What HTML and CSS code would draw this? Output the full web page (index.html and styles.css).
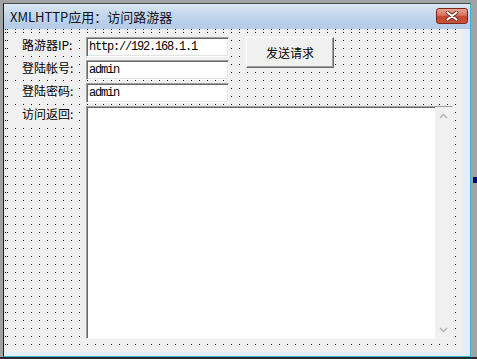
FILE: index.html
```html
<!DOCTYPE html>
<html lang="zh-CN">
<head>
<meta charset="utf-8">
<title>XMLHTTP应用：访问路游器</title>
<link rel="stylesheet" href="styles.css">
</head>
<body>
<div class="desk">
  <div class="window">
    <div class="titlebar">
      <span class="title">XMLHTTP应用：访问路游器</span>
      <span class="close">
        <svg width="14" height="10" viewBox="0 0 14 10">
          <path d="M2.5 1.5 L11.5 8.5 M11.5 1.5 L2.5 8.5" stroke="#5a1d12" stroke-width="3.6" stroke-linecap="round"/>
          <path d="M2.5 1.5 L11.5 8.5 M11.5 1.5 L2.5 8.5" stroke="#ffffff" stroke-width="2.2" stroke-linecap="round"/>
        </svg>
      </span>
    </div>
    <div class="client">
      <div class="form">
        <div class="label">路游器IP:</div>
        <div class="textbox">http://192.168.1.1</div>
        <div class="button">发送请求</div>
        <div class="label">登陆帐号:</div>
        <div class="textbox">admin</div>
        <div class="label">登陆密码:</div>
        <div class="textbox">admin</div>
        <div class="label">访问返回:</div>
        <div class="memo">
          <div class="scroll">
            <svg width="9" height="6" viewBox="0 0 9 6"><path d="M1 5 L4.5 1.5 L8 5" fill="none" stroke="#b4b4b4" stroke-width="1.5"/></svg>
            <svg width="9" height="6" viewBox="0 0 9 6"><path d="M1 1 L4.5 4.5 L8 1" fill="none" stroke="#b4b4b4" stroke-width="1.5"/></svg>
          </div>
        </div>
      </div>
    </div>
  </div>
  <span class="handle"></span>
</div>
</body>
</html>
```
FILE: styles.css
```css
html, body {
  margin: 0;
  padding: 0;
}
body {
  width: 477px;
  height: 359px;
  overflow: hidden;
  background: #a0a0a0;
}
.desk {
  position: relative;
  width: 477px;
  height: 359px;
  box-sizing: border-box;
  padding: 3px 0 0 3px;
  background: #a2a2a2;
  border-bottom: 2px solid #2a2a2a;
}
.window {
  width: 468px;
  height: 354px;
  box-sizing: border-box;
  border-left: 1px solid #1c1c1c;
  border-top: 1px solid #4a4a4a;
  border-right: 1px solid #3cb4d6;
  border-bottom: 1px solid #3cb4d6;
  background: #e4eef8;
  display: flex;
  flex-direction: column;
}
.titlebar {
  height: 25px;
  flex: none;
  display: flex;
  justify-content: space-between;
  align-items: flex-start;
  background: linear-gradient(#dbe7f4, #c3d6ec 45%, #b3cae6);
}
.title {
  margin: 4px 0 0 6px;
  font-family: "Noto Sans CJK SC", "Noto Sans", sans-serif;
  font-size: 13px;
  line-height: 17px;
  color: #10131c;
}
.close {
  margin: 4px 2px 0 0;
  width: 32px;
  height: 16px;
  box-sizing: border-box;
  border: 1px solid #7e2618;
  border-radius: 3px;
  background: linear-gradient(#e6a394, #d8715d 45%, #c64430 55%, #c9523a);
  display: flex;
  align-items: center;
  justify-content: center;
}
.client {
  flex: 1;
  margin: 0 7px 4px 1px;
  background-color: #f0f0f0;
  background-image:
    repeating-linear-gradient(to bottom, transparent 0 1px, #f0f0f0 1px 8px),
    repeating-linear-gradient(to right, #000 0 1px, #f0f0f0 1px 8px);
  background-position: 2px 3px, 2px 3px;
}
.form {
  padding: 8px 0 0 5px;
  display: grid;
  grid-template-columns: 66px 143px auto;
  grid-template-rows: 20px 20px 20px 233px;
  column-gap: 10px;
  row-gap: 3px;
  align-items: start;
}
.label {
  grid-column: 1;
  height: 18px;
  box-sizing: border-box;
  padding: 1px 0 0 12px;
  background: #f0f0f0;
  font-family: "Noto Sans CJK SC", sans-serif;
  font-size: 12px;
  line-height: 14px;
  color: #000;
  white-space: nowrap;
}
.textbox {
  grid-column: 2;
  height: 20px;
  box-sizing: border-box;
  border-top: 1px solid #a0a0a0;
  border-left: 1px solid #a0a0a0;
  border-right: 1px solid #ffffff;
  border-bottom: 1px solid #ffffff;
  box-shadow: inset 1px 1px 0 #696969, inset -1px -1px 0 #e3e3e3;
  background: #fff;
  padding: 1px 0 0 2px;
  font-family: "Liberation Mono", monospace;
  font-size: 12px;
  letter-spacing: -1.2px;
  line-height: 16px;
  color: #000;
  white-space: nowrap;
}
.button {
  grid-column: 3;
  grid-row: 1 / span 2;
  margin-left: 7px;
  width: 88px;
  height: 31px;
  box-sizing: border-box;
  border-top: 1px solid #ffffff;
  border-left: 1px solid #ffffff;
  border-right: 1px solid #696969;
  border-bottom: 1px solid #696969;
  box-shadow: inset -1px -1px 0 #a0a0a0;
  background: #f0f0f0;
  display: flex;
  align-items: center;
  justify-content: center;
  font-family: "Noto Sans CJK SC", sans-serif;
  font-size: 12px;
  line-height: 14px;
  color: #000;
}
.memo {
  grid-column: 2 / span 2;
  grid-row: 4;
  width: 367px;
  height: 233px;
  box-sizing: border-box;
  border-top: 1px solid #a0a0a0;
  border-left: 1px solid #a0a0a0;
  border-right: 1px solid #f4f4f4;
  border-bottom: 1px solid #f4f4f4;
  box-shadow: inset 1px 1px 0 #696969;
  background: #fff;
  display: flex;
  justify-content: flex-end;
}
.scroll {
  width: 17px;
  background: #f0f0f0;
  display: flex;
  flex-direction: column;
  justify-content: space-between;
  align-items: center;
  padding: 6px 0 5px;
}
.handle {
  position: absolute;
  left: 473px;
  top: 177px;
  width: 5px;
  height: 6px;
  background: #000080;
}
```
